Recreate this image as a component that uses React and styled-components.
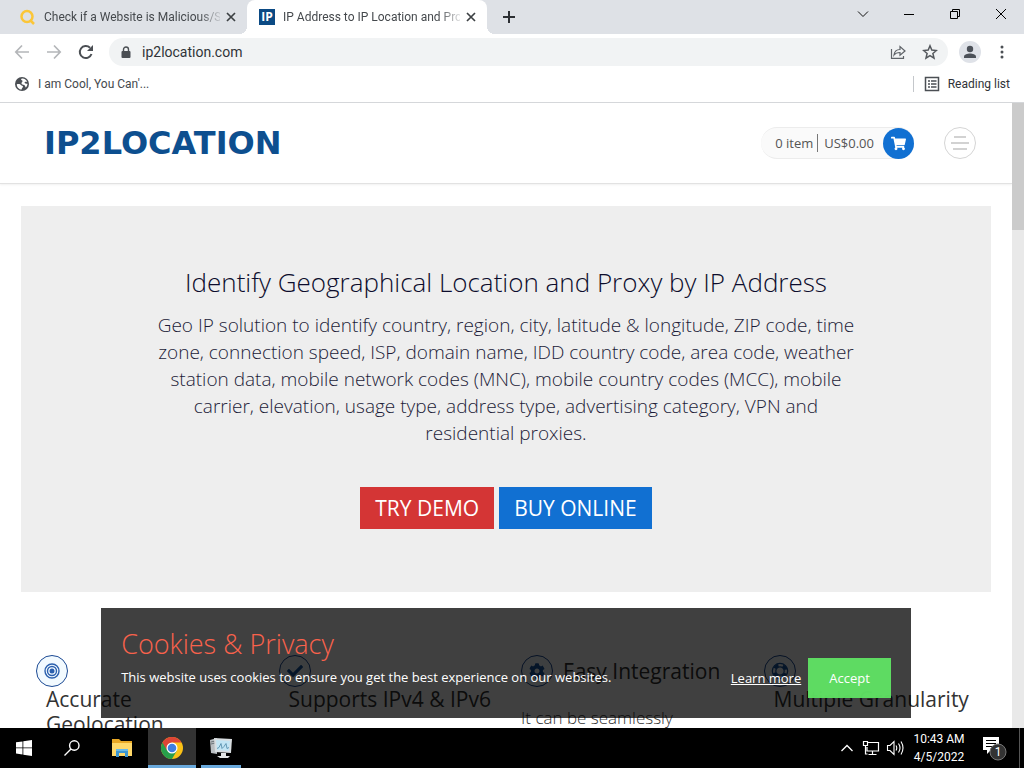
import React from "react";
import styled, { createGlobalStyle } from "styled-components";
import { FaCheck, FaCog, FaShoppingCart } from "react-icons/fa";

const GlobalStyle = createGlobalStyle`
  * {
    box-sizing: border-box;
  }

  body {
    margin: 0;
    font-family: "Open Sans", sans-serif;
    color: #333;
    background: #fff;
  }

  h1, h2, h3, p {
    margin: 0;
  }

  button {
    padding: 0;
    border: 0;
    background: none;
    font-family: inherit;
    color: inherit;
  }

  svg {
    display: block;
    flex: none;
  }
`;

const Screen = styled.div`
  display: flex;
  flex-direction: column;
  height: 100vh;
  overflow: hidden;
`;

/* browser window */

const TabStrip = styled.div`
  display: flex;
  align-items: stretch;
  height: 34px;
  background: #dee1e6;
`;

const Tab = styled.div`
  position: relative;
  display: flex;
  align-items: center;
  gap: 8px;
  width: ${(props) => (props.$active ? 240 : 247)}px;
  padding: 0 10px 0 ${(props) => (props.$active ? 12 : 20)}px;
  border-radius: 8px 8px 0 0;
  background: ${(props) => (props.$active ? "#fff" : "transparent")};

  &::before,
  &::after {
    content: "";
    display: ${(props) => (props.$active ? "block" : "none")};
    position: absolute;
    bottom: 0;
    width: 8px;
    height: 8px;
  }

  &::before {
    left: -8px;
    background: radial-gradient(circle at 0 0, transparent 8px, #fff 8px);
  }

  &::after {
    right: -8px;
    background: radial-gradient(circle at 100% 0, transparent 8px, #fff 8px);
  }
`;

const TabTitle = styled.span`
  flex: 1;
  overflow: hidden;
  white-space: nowrap;
  font-family: Roboto, sans-serif;
  font-size: 12px;
  line-height: 16px;
  color: #45494d;
  mask-image: linear-gradient(to right, #000 88%, transparent 102%);
`;

const TabClose = styled.button`
  display: grid;
  place-items: center;
  width: 12px;
  height: 16px;
  margin-left: -3px;
`;

const IpBadge = styled.span`
  width: 16px;
  height: 16px;
  font-size: 12px;
  font-weight: 700;
  line-height: 16px;
  text-align: center;
  color: #fff;
  background: #0b4a84;
`;

const NewTab = styled.button`
  display: grid;
  place-items: center;
  width: 44px;
`;

const WindowButtons = styled.div`
  display: flex;
  margin-left: auto;
  height: 28px;
`;

const WindowButton = styled.button`
  display: grid;
  place-items: center;
  width: 46px;
`;

const Toolbar = styled.div`
  display: flex;
  align-items: center;
  height: 36px;
  padding: 0 6px;
`;

const ToolButton = styled.button`
  display: grid;
  place-items: center;
  width: 32px;
  height: 28px;
`;

const AddressBar = styled.div`
  display: flex;
  flex: 1;
  align-items: center;
  height: 28px;
  margin: 0 6px 0 7px;
  padding: 0 2px 0 12px;
  border-radius: 14px;
  background: #f1f3f4;
`;

const UrlInput = styled.input`
  flex: 1;
  min-width: 0;
  margin-left: 11px;
  padding: 0;
  border: 0;
  outline: 0;
  font-family: Roboto, sans-serif;
  font-size: 14px;
  line-height: 20px;
  color: #303338;
  background: transparent;
`;

const Bookmarks = styled.div`
  display: flex;
  align-items: center;
  height: 33px;
  padding: 0 14px 4px;
  border-bottom: 1px solid #d5d7da;
`;

const Bookmark = styled.a`
  display: flex;
  align-items: center;
  gap: 8px;
  font-family: Roboto, sans-serif;
  font-size: 12px;
  line-height: 16px;
  color: #45494d;
  text-decoration: none;
`;

const ReadingList = styled.button`
  display: flex;
  align-items: center;
  gap: 8px;
  height: 16px;
  margin-left: auto;
  padding-left: 10px;
  border-left: 1px solid #c4c7cb;
  font-family: Roboto, sans-serif;
  font-size: 12px;
  color: #303338;
`;

/* web page */

const Viewport = styled.div`
  position: relative;
  display: flex;
  flex: 1;
  min-height: 0;
  overflow: hidden;
`;

const Page = styled.div`
  position: relative;
  flex: 1;
  min-width: 0;
  overflow: hidden;
`;

const Scrollbar = styled.div`
  width: 12px;
  background: #e9e9e9;
`;

const ScrollThumb = styled.div`
  height: 127px;
  background: #cbcbcb;
`;

const Header = styled.header`
  display: flex;
  align-items: center;
  height: 81px;
  padding: 0 36px 0 44px;
  border-bottom: 1px solid #e2e2e2;
  box-shadow: 0 1px 2px rgba(0, 0, 0, 0.06);
`;

const Logo = styled.a`
  font-family: "DejaVu Sans", sans-serif;
  font-size: 32px;
  font-weight: 700;
  line-height: 40px;
  color: #0d4f8f;
  text-decoration: none;
`;

const Cart = styled.a`
  display: flex;
  align-items: center;
  height: 32px;
  margin-left: auto;
  padding-left: 14px;
  border: 1px solid #ececec;
  border-width: 1px 0;
  border-radius: 16px;
  font-size: 13px;
  line-height: 18px;
  color: #555;
  background: #fafafa;
  text-decoration: none;
`;

const CartTotal = styled.span`
  margin-left: 4px;
  padding: 0 9px 0 6px;
  border-left: 1px solid #777;
`;

const CartIcon = styled.span`
  display: grid;
  place-items: center;
  width: 31px;
  height: 31px;
  border-radius: 50%;
  color: #fff;
  background: #1170d2;
`;

const MenuButton = styled.button`
  display: grid;
  place-items: center;
  width: 32px;
  height: 32px;
  margin-left: 30px;
  border: 1px solid #d5d5d5;
  border-radius: 50%;
`;

const Hero = styled.section`
  display: flex;
  flex-direction: column;
  align-items: center;
  margin: 22px 21px 0;
  padding: 59px 120px 63px;
  background: #eee;
  text-align: center;
`;

const HeroTitle = styled.h1`
  font-size: 26px;
  font-weight: 300;
  line-height: 34px;
  color: #0c0c2c;
`;

const HeroText = styled.p`
  max-width: 714px;
  margin-top: 13px;
  font-size: 19px;
  font-weight: 300;
  line-height: 27px;
  color: #1c1c38;
`;

const HeroActions = styled.div`
  display: flex;
  gap: 5px;
  margin-top: 40px;
`;

const HeroButton = styled.button`
  height: 42px;
  padding: 0 15px;
  font-size: 21px;
  line-height: 42px;
  color: #fff;
  background: ${(props) => (props.$primary ? "#1170d2" : "#d43535")};
`;

const Features = styled.section`
  display: grid;
  grid-template-columns: repeat(4, 1fr);
  margin: 63px 21px 0;
`;

const FeatureCard = styled.article`
  display: flex;
  flex-wrap: wrap;
  align-items: center;
  align-content: flex-start;
  padding: 0 15px;
`;

const FeatureIcon = styled.span`
  display: grid;
  place-items: center;
  width: 32px;
  height: 32px;
  border: 1px solid #1c4a94;
  border-radius: 50%;
  color: #15559f;
  background: #f2faff;
`;

const FeatureTitle = styled.h3`
  margin-left: 10px;
  font-size: 21px;
  font-weight: 400;
  line-height: 25px;
  color: #333;
`;

const FeatureText = styled.p`
  width: 100%;
  margin-top: 19px;
  font-size: 17px;
  font-weight: 300;
  line-height: 24px;
  color: #333;
`;

const CookieBanner = styled.aside`
  position: absolute;
  right: 10%;
  bottom: 10px;
  left: 10%;
  display: flex;
  align-items: flex-end;
  height: 110px;
  padding: 20px;
  color: #fff;
  background: rgba(0, 0, 0, 0.75);
`;

const CookieCopy = styled.div`
  flex: 1;
  align-self: flex-start;
`;

const CookieTitle = styled.h2`
  font-size: 27px;
  font-weight: 300;
  line-height: 32px;
  color: #f9624c;
`;

const CookieText = styled.p`
  margin-top: 8px;
  font-size: 13px;
  line-height: 18px;
`;

const LearnMore = styled.a`
  margin-right: 7px;
  font-size: 13px;
  line-height: 40px;
  color: #fff;
`;

const AcceptButton = styled.button`
  height: 40px;
  padding: 0 21px;
  font-size: 13px;
  color: #fff;
  background: rgba(96, 228, 100, 0.95);
`;

/* desktop taskbar */

const Taskbar = styled.footer`
  display: flex;
  height: 40px;
  color: #fff;
  background: #000;
`;

const TaskButton = styled.button`
  display: grid;
  place-items: center;
  width: ${(props) => props.$width || 48}px;
  margin-right: ${(props) => props.$gap || 0}px;
  padding-top: ${(props) => (props.$running ? 3 : 0)}px;
  border-bottom: ${(props) => (props.$running ? "3px solid #69a9dc" : "0")};
  background: ${(props) => (props.$focused ? "#333" : "transparent")};
`;

const Tray = styled.div`
  display: flex;
  align-items: center;
  margin-left: auto;
`;

const TrayButton = styled.button`
  display: grid;
  place-items: center;
  width: 24px;
  height: 40px;
`;

const Clock = styled.time`
  width: 64px;
  font-family: Roboto, sans-serif;
  font-size: 12px;
  line-height: 18px;
  text-align: center;
`;

const NotificationButton = styled.button`
  display: grid;
  place-items: center;
  width: 49px;
  height: 40px;
  border-right: 1px solid #555;
  margin-right: 4px;
`;

function Stroke({ size = 16, width = 2, color = "currentColor", d, cap = "butt" }) {
  return (
    <svg width={size} height={size} viewBox={`0 0 ${size} ${size}`} fill="none" stroke={color} strokeWidth={width} strokeLinecap={cap}>
      <path d={d} />
    </svg>
  );
}

function CloseIcon() {
  return <Stroke size={12} width={1.7} color="#3c4043" d="M2 2l8 8M10 2l-8 8" />;
}

function GlobeIcon() {
  return (
    <svg width="16" height="16" viewBox="0 0 16 16">
      <circle cx="8" cy="8" r="7" fill="#4b4f54" />
      <path
        d="M2.800 8.200c1.600-.6 3.700-.3 4.200.8.400 1 2 .6 2 1.700 0 .9-1.200 1-1.300 2.900-2.800-.2-5-2.500-4.900-5.400zM8.500 2.500c2.100 0 3.900 1.300 4.700 3.200-.9.300-1.500-.3-2.300.2-.7.500-.2 1.300.6 1.500.8.200 1.400.5 2 .4-.1 1.500-.7 2.800-1.700 3.800-.5-1-.5-2.200-1.700-2.700-1-.4-2.300-.2-2.600-1.400-.2-1.200 1-1.500 1-2.500s-1.300-.7-1.400-1.600c0-.5.700-.9 1.400-.9z"
        fill="#fff"
      />
    </svg>
  );
}

function ListIcon() {
  return (
    <svg width="16" height="16" viewBox="0 0 16 16" fill="none" stroke="#4b4f54" strokeWidth="1.5">
      <rect x="1.5" y="1.5" width="13" height="13" />
      <path d="M4 5h2M7 5h5.500M4 8h2M7 8h5.500M4 11h2M7 11h5.500" />
    </svg>
  );
}

function ShareIcon() {
  return (
    <svg width="16" height="16" viewBox="0 0 16 16" fill="none" stroke="#5f6368" strokeWidth="1.2">
      <path d="M1.500 5v9.400h12V12M4 11c.5-4 3-5.500 6-5.500V2.500l5 4.500-5 4.200V8.500C7.500 8.500 5.500 9 4 11z" />
    </svg>
  );
}

function StarIcon() {
  return (
    <svg width="16" height="16" viewBox="0 0 16 16" fill="none" stroke="#54585d" strokeWidth="1.500">
      <path d="M8 1.800l1.800 4.300 4.600.4-3.500 3 1.100 4.600L8 11.600l-4 2.500 1.100-4.600-3.500-3 4.600-.4z" />
    </svg>
  );
}

function ProfileIcon() {
  return (
    <svg width="22" height="22" viewBox="0 0 22 22">
      <circle cx="11" cy="11" r="11" fill="#dfe2e8" />
      <circle cx="11" cy="8" r="3.200" fill="#4c5159" />
      <path d="M5 17v-1.500c0-2 3.500-3 6-3s6 1 6 3V17z" fill="#4c5159" />
    </svg>
  );
}

function TargetIcon() {
  return (
    <svg width="16" height="16" viewBox="0 0 16 16" fill="none" stroke="#2b60ae" strokeWidth="1.400">
      <circle cx="8" cy="8" r="7" />
      <circle cx="8" cy="8" r="4.500" />
      <circle cx="8" cy="8" r="2.500" fill="#2b60ae" stroke="none" />
    </svg>
  );
}

function LifeRingIcon() {
  return (
    <svg width="18" height="18" viewBox="0 0 18 18" fill="none" stroke="currentColor">
      <circle cx="9" cy="9" r="6" strokeWidth="3" strokeDasharray="4.710 4.710" strokeDashoffset="-2.360" />
      <circle cx="9" cy="9" r="7.700" strokeWidth="1.200" />
      <circle cx="9" cy="9" r="4.200" strokeWidth="1.200" />
    </svg>
  );
}

function FolderIcon() {
  return (
    <svg width="22" height="20" viewBox="0 0 22 20">
      <path d="M1 1h7l2 2h11v15H1z" fill="#e9a825" />
      <path d="M1 5h20v13H1z" fill="#ffd869" />
      <path d="M5 11h12v8h-3v-4H8v4H5z" fill="#3c96d2" />
      <path d="M5 11h12v2H5z" fill="#68b9e8" />
    </svg>
  );
}

function ChromeIcon() {
  return (
    <svg width="24" height="24" viewBox="0 0 24 24">
      <circle cx="12" cy="12" r="11" fill="#fbc116" />
      <path d="M12 12L2.470 6.500A11 11 0 0 0 12 23l4.800-8.200z" fill="#279f4b" />
      <path d="M2.470 6.500A11 11 0 0 1 21.530 6.500H12L7.200 14.700z" fill="#dd4536" />
      <circle cx="12" cy="12" r="5.500" fill="#fff" />
      <circle cx="12" cy="12" r="4.300" fill="#3f7ee0" />
    </svg>
  );
}

function MonitorIcon() {
  return (
    <svg width="24" height="24" viewBox="0 0 24 24">
      <path d="M1 4l7-2v16l-6-1z" fill="#b9bec2" />
      <path d="M2 6l4-1M2 8l4-1" stroke="#6c7479" />
      <path d="M5 2l18 1-1 14-16-1z" fill="#d8dde0" />
      <path d="M7 4l14 1-1 10-12-1z" fill="#c2e5f4" />
      <path d="M8 12.500l2-1 2-4 1 5 2-2 2-3 1 5 2-1" fill="none" stroke="#4b87a6" strokeWidth=".8" />
      <path d="M12 17h5v3h4l-2 2h-8l-3-2h4z" fill="#e1e4e5" />
    </svg>
  );
}

function NotificationIcon() {
  return (
    <svg width="26" height="28" viewBox="0 0 26 28">
      <path d="M1 3h16v13H9l-4 4v-4H1z" fill="#fff" />
      <path d="M4 6.500h10M4 9.500h10M4 12.500h7" stroke="#000" />
      <circle cx="16" cy="18" r="8" fill="#333" stroke="#777" />
      <text x="16" y="22" textAnchor="middle" fill="#fff" fontFamily="Roboto, sans-serif" fontSize="12">1</text>
    </svg>
  );
}

const features = [
  { title: "Accurate Geolocation", icon: <TargetIcon /> },
  { title: "Supports IPv4 & IPv6", icon: <FaCheck size={16} /> },
  { title: "Easy Integration", icon: <FaCog size={16} />, text: "It can be seamlessly" },
  { title: "Multiple Granularity", icon: <LifeRingIcon /> },
];

function Browser() {
  return (
    <>
      <TabStrip>
        <Tab>
          <svg width="16" height="16" viewBox="0 0 16 16" fill="none" stroke="#fbc638" strokeWidth="2.500">
            <circle cx="7" cy="7.500" r="5.500" />
            <path d="M10 11l4 4" />
          </svg>
          <TabTitle>Check if a Website is Malicious/S</TabTitle>
          <TabClose aria-label="Close tab">
            <CloseIcon />
          </TabClose>
        </Tab>
        <Tab $active>
          <IpBadge>IP</IpBadge>
          <TabTitle>IP Address to IP Location and Pro</TabTitle>
          <TabClose aria-label="Close tab">
            <CloseIcon />
          </TabClose>
        </Tab>
        <NewTab aria-label="New tab">
          <Stroke size={14} color="#2c2f33" d="M7 1v12M1 7h12" />
        </NewTab>
        <WindowButtons>
          <WindowButton aria-label="Search tabs">
            <Stroke size={12} width={1} color="#111" d="M1 3.500l5 5 5-5" />
          </WindowButton>
          <WindowButton aria-label="Minimize">
            <Stroke size={10} width={1} color="#000" d="M0 5.500h10" />
          </WindowButton>
          <WindowButton aria-label="Restore">
            <Stroke size={12} width={1} color="#000" d="M1.500 3.500h7v7h-7zM3.500 3.500v-2h7v7h-2" />
          </WindowButton>
          <WindowButton aria-label="Close">
            <Stroke size={12} width={1} color="#000" d="M1 1l10 10M11 1L1 11" />
          </WindowButton>
        </WindowButtons>
      </TabStrip>
      <Toolbar>
        <ToolButton aria-label="Back">
          <Stroke color="#b4b6b9" width={1.7} d="M15 8H2M8 1.500L1.800 8 8 14.500" />
        </ToolButton>
        <ToolButton aria-label="Forward">
          <Stroke color="#b4b6b9" width={1.7} d="M1 8h13M8 1.500L14.200 8 8 14.500" />
        </ToolButton>
        <ToolButton aria-label="Reload">
          <svg width="16" height="16" viewBox="0 0 16 16">
            <path d="M13.500 10A6 6 0 1 1 12 3.700" fill="none" stroke="#4b4f54" strokeWidth="2" />
            <path d="M15 1v6H9z" fill="#4b4f54" />
          </svg>
        </ToolButton>
        <AddressBar>
          <svg width="10" height="13" viewBox="0 0 10 13">
            <rect x="0.500" y="5" width="9" height="7" rx="1" fill="#4b4f54" />
            <path d="M2.500 5V3.500a2.500 2.500 0 0 1 5 0V5" fill="none" stroke="#4b4f54" strokeWidth="1.400" />
          </svg>
          <UrlInput aria-label="Address" defaultValue="ip2location.com" />
          <ToolButton aria-label="Share">
            <ShareIcon />
          </ToolButton>
          <ToolButton aria-label="Bookmark this page">
            <StarIcon />
          </ToolButton>
        </AddressBar>
        <ToolButton aria-label="Profile">
          <ProfileIcon />
        </ToolButton>
        <ToolButton aria-label="Menu">
          <svg width="4" height="16" viewBox="0 0 4 16" fill="#4b4f54">
            <circle cx="2" cy="3" r="1.500" />
            <circle cx="2" cy="8" r="1.500" />
            <circle cx="2" cy="13" r="1.500" />
          </svg>
        </ToolButton>
      </Toolbar>
      <Bookmarks>
        <Bookmark href="#">
          <GlobeIcon />
          I am Cool, You Can'...
        </Bookmark>
        <ReadingList>
          <ListIcon />
          Reading list
        </ReadingList>
      </Bookmarks>
    </>
  );
}

function Website() {
  return (
    <Viewport>
      <Page>
        <Header>
          <Logo href="#">IP2LOCATION</Logo>
          <Cart href="#">
            <span>0 item</span>
            <CartTotal>US$0.00</CartTotal>
            <CartIcon>
              <FaShoppingCart size={15} />
            </CartIcon>
          </Cart>
          <MenuButton aria-label="Open menu">
            <Stroke size={18} width={1.5} color="#c4c4c4" d="M3 3h12M0 9h18M2 15h14" />
          </MenuButton>
        </Header>
        <Hero>
          <HeroTitle>Identify Geographical Location and Proxy by IP Address</HeroTitle>
          <HeroText>
            Geo IP solution to identify country, region, city, latitude &amp; longitude, ZIP code, time zone, connection
            speed, ISP, domain name, IDD country code, area code, weather station data, mobile network codes (MNC),
            mobile country codes (MCC), mobile carrier, elevation, usage type, address type, advertising category, VPN
            and residential proxies.
          </HeroText>
          <HeroActions>
            <HeroButton>TRY DEMO</HeroButton>
            <HeroButton $primary>BUY ONLINE</HeroButton>
          </HeroActions>
        </Hero>
        <Features>
          {features.map((feature) => (
            <FeatureCard key={feature.title}>
              <FeatureIcon>{feature.icon}</FeatureIcon>
              <FeatureTitle>{feature.title}</FeatureTitle>
              {feature.text && <FeatureText>{feature.text}</FeatureText>}
            </FeatureCard>
          ))}
        </Features>
        <CookieBanner>
          <CookieCopy>
            <CookieTitle>Cookies &amp; Privacy</CookieTitle>
            <CookieText>This website uses cookies to ensure you get the best experience on our websites.</CookieText>
          </CookieCopy>
          <LearnMore href="#">Learn more</LearnMore>
          <AcceptButton>Accept</AcceptButton>
        </CookieBanner>
      </Page>
      <Scrollbar>
        <ScrollThumb />
      </Scrollbar>
    </Viewport>
  );
}

export default function App() {
  return (
    <Screen>
      <GlobalStyle />
      <Browser />
      <Website />
      <Taskbar>
        <TaskButton aria-label="Start">
          <svg width="16" height="16" viewBox="0 0 16 16" fill="#fff">
            <path d="M0 2.300l6.500-.9v6.100H0zM7.300 1.300L16 0v7.500H7.300zM0 8.300h6.500v6.200L0 13.600zM7.300 8.300H16V16l-8.700-1.300z" />
          </svg>
        </TaskButton>
        <TaskButton aria-label="Search" $gap={2}>
          <Stroke width={1.4} color="#fff" d="M15 5.500a4.700 4.700 0 1 1-9.400 0a4.700 4.700 0 1 1 9.400 0zM7 9L.5 15.500" />
        </TaskButton>
        <TaskButton aria-label="File Explorer" $gap={2}>
          <FolderIcon />
        </TaskButton>
        <TaskButton aria-label="Chrome" $gap={5} $running $focused>
          <ChromeIcon />
        </TaskButton>
        <TaskButton aria-label="Monitor" $width={40} $running>
          <MonitorIcon />
        </TaskButton>
        <Tray>
          <TrayButton aria-label="Show hidden icons">
            <Stroke size={14} width={1.3} d="M1.500 10L7 4.500l5.500 5.500" />
          </TrayButton>
          <TrayButton aria-label="Network">
            <Stroke size={18} width={1.2} d="M6 3.500h10.500v8.500H5V8M1.500 2.500h4v4h-4zM3.500 6.500v8.500h2M10.500 12v3M6.500 15.500h8" />
          </TrayButton>
          <TrayButton aria-label="Volume">
            <Stroke size={18} width={1.1} d="M1.500 6.500h2.500l4-4v13l-4-4H1.500zM10 6.500q1.500 2.500 0 5M12.500 4.500q3 4.500 0 9M15 2.500q4 6.500 0 13" />
          </TrayButton>
          <Clock>
            10:43 AM
            <br />
            4/5/2022
          </Clock>
          <NotificationButton aria-label="Notifications">
            <NotificationIcon />
          </NotificationButton>
        </Tray>
      </Taskbar>
    </Screen>
  );
}
